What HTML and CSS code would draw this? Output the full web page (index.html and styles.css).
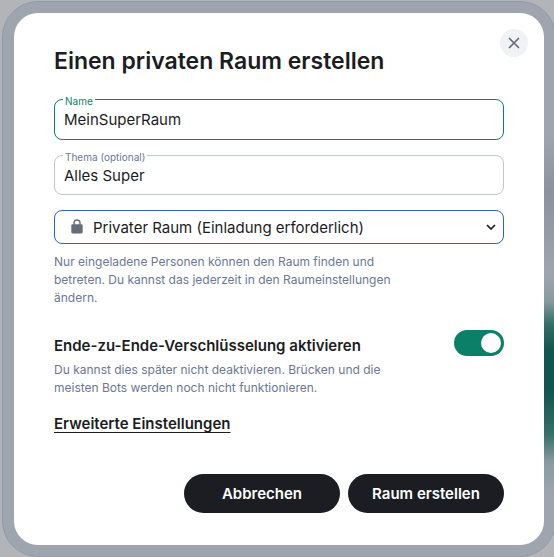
FILE: index.html
```html
<!DOCTYPE html>
<html lang="de">
<head>
<meta charset="utf-8">
<meta name="viewport" content="width=device-width, initial-scale=1">
<title>Einen privaten Raum erstellen</title>
<link rel="stylesheet" href="styles.css">
</head>
<body>
<div class="glass">
  <main class="dialog" role="dialog" aria-labelledby="title">
    <button class="close" type="button" aria-label="Schließen">
      <svg width="28" height="28" viewBox="0 0 28 28" aria-hidden="true"><path d="M9.500 9.500l9 9M18.500 9.500l-9 9" fill="none" stroke="#656d77" stroke-width="1.700" stroke-linecap="round"/></svg>
    </button>
    <h1 class="title" id="title">Einen privaten Raum erstellen</h1>
    <form class="form">
      <div class="field field-active">
        <label class="field-label" for="name">Name</label>
        <input class="field-input" id="name" type="text" value="MeinSuperRaum">
      </div>
      <div class="field">
        <label class="field-label" for="topic">Thema (optional)</label>
        <input class="field-input" id="topic" type="text" value="Alles Super">
      </div>
      <div class="picker">
        <svg class="lock" width="12" height="15" viewBox="0 0 12 15" aria-hidden="true"><path d="M3 6.500V4a3 3 0 0 1 6 0v2.500" fill="none" stroke="#656d77" stroke-width="1.400"/><rect x="0.300" y="5.300" width="11.400" height="9.200" rx="1.400" fill="#656d77"/></svg>
        <select class="picker-select" aria-label="Sichtbarkeit des Raums">
          <option>Privater Raum (Einladung erforderlich)</option>
        </select>
        <svg class="chevron" width="10" height="6" viewBox="0 0 10 6" aria-hidden="true"><path d="M1 1l4 4 4-4" fill="none" stroke="#1b1d22" stroke-width="1.700"/></svg>
      </div>
      <p class="hint">Nur eingeladene Personen können den Raum finden und betreten. Du kannst das jederzeit in den Raumeinstellungen ändern.</p>
      <div class="encryption">
        <label class="encryption-label" for="e2ee">Ende-zu-Ende-Verschlüsselung aktivieren</label>
        <input class="toggle" id="e2ee" type="checkbox" role="switch" checked>
      </div>
      <p class="hint">Du kannst dies später nicht deaktivieren. Brücken und die meisten Bots werden noch nicht funktionieren.</p>
      <a class="advanced" href="#">Erweiterte Einstellungen</a>
      <div class="actions">
        <button class="action" type="button">Abbrechen</button>
        <button class="action" type="button">Raum erstellen</button>
      </div>
    </form>
  </main>
</div>
</body>
</html>
```
FILE: styles.css
```css
* {
  box-sizing: border-box;
}

html {
  overflow: hidden;
}

body {
  margin: 0;
  padding-top: 1px;
  background: #b3b4b8;
  color: #1b1d22;
  font-family: Inter, "Liberation Sans", sans-serif;
  font-size: 15px;
}

.glass {
  margin: 0 -2px 0 2px;
  padding: 11px;
  border: 1px solid #8e9bac;
  border-radius: 36px;
  background: linear-gradient(#9fa5af 0, #9fa5af 24%, #8b929d 34%, #9fa5af 49%, #889a9f 54%, #347069 58%, #0f5550 63%, #0f5550 70%, #347069 78%, #889a9f 83%, #9fa5af 89%) right / 50% 100% no-repeat #9fa5af;
}

.dialog {
  position: relative;
  padding: 32px 40px;
  border-radius: 24px;
  background: #fff;
}

.close {
  position: absolute;
  top: 16px;
  right: 16px;
  width: 28px;
  height: 28px;
  padding: 0;
  border: 0;
  border-radius: 50%;
  background: #f0f2f5;
}

.close svg {
  display: block;
}

.title {
  margin: 0 0 22px;
  font-size: 23px;
  font-weight: 600;
  line-height: 32px;
}

.form {
  display: flex;
  flex-direction: column;
}

.field {
  position: relative;
  height: 40px;
  margin-bottom: 15px;
  border: 1px solid #c1c6cd;
  border-radius: 8px;
}

.field-label {
  position: absolute;
  top: -5px;
  left: 8px;
  padding: 0 2px;
  background: #fff;
  color: #6b7793;
  font-size: 10px;
  line-height: 12px;
}

.field-active {
  height: 41px;
  border-color: #0b7f67;
}

.field-active .field-label {
  color: #0b7f67;
}

.field-input {
  width: 100%;
  height: 100%;
  padding: 0 9px;
  border: 0;
  outline: 0;
  background: transparent;
  color: inherit;
  font: inherit;
}

.picker {
  position: relative;
  height: 34px;
}

.picker-select {
  display: block;
  width: 100%;
  height: 100%;
  padding: 0 32px 0 38px;
  appearance: none;
  border: 1px solid #2a63cf;
  border-radius: 8px;
  background: #fff;
  color: inherit;
  font: inherit;
}

.lock {
  position: absolute;
  top: 9px;
  left: 17px;
}

.chevron {
  position: absolute;
  top: 14px;
  right: 8px;
}

.hint {
  width: 76%;
  margin: 0;
  color: #6b7793;
  font-size: 12px;
  line-height: 18px;
}

.picker + .hint {
  margin-top: 9px;
}

.encryption {
  display: flex;
  align-items: flex-start;
  justify-content: space-between;
  height: 31px;
  margin-top: 23px;
}

.encryption-label {
  padding-top: 6px;
  font-weight: 600;
  line-height: 20px;
}

.toggle {
  display: flex;
  align-items: center;
  justify-content: flex-end;
  flex: none;
  width: 50px;
  height: 26px;
  margin: 0;
  padding: 3px;
  appearance: none;
  border-radius: 13px;
  background: #0b7f67;
}

.toggle::before {
  width: 20px;
  height: 20px;
  border-radius: 50%;
  background: #fff;
  content: "";
}

.advanced {
  align-self: flex-start;
  margin-top: 17px;
  color: inherit;
  font-weight: 600;
  line-height: 20px;
  text-underline-offset: 3px;
}

.actions {
  display: flex;
  justify-content: flex-end;
  gap: 8px;
  margin-top: 40px;
}

.action {
  min-width: 156px;
  height: 39px;
  padding: 0 16px;
  border: 0;
  border-radius: 20px;
  background: #1b1d22;
  color: #fff;
  font: inherit;
  font-weight: 600;
}
```
